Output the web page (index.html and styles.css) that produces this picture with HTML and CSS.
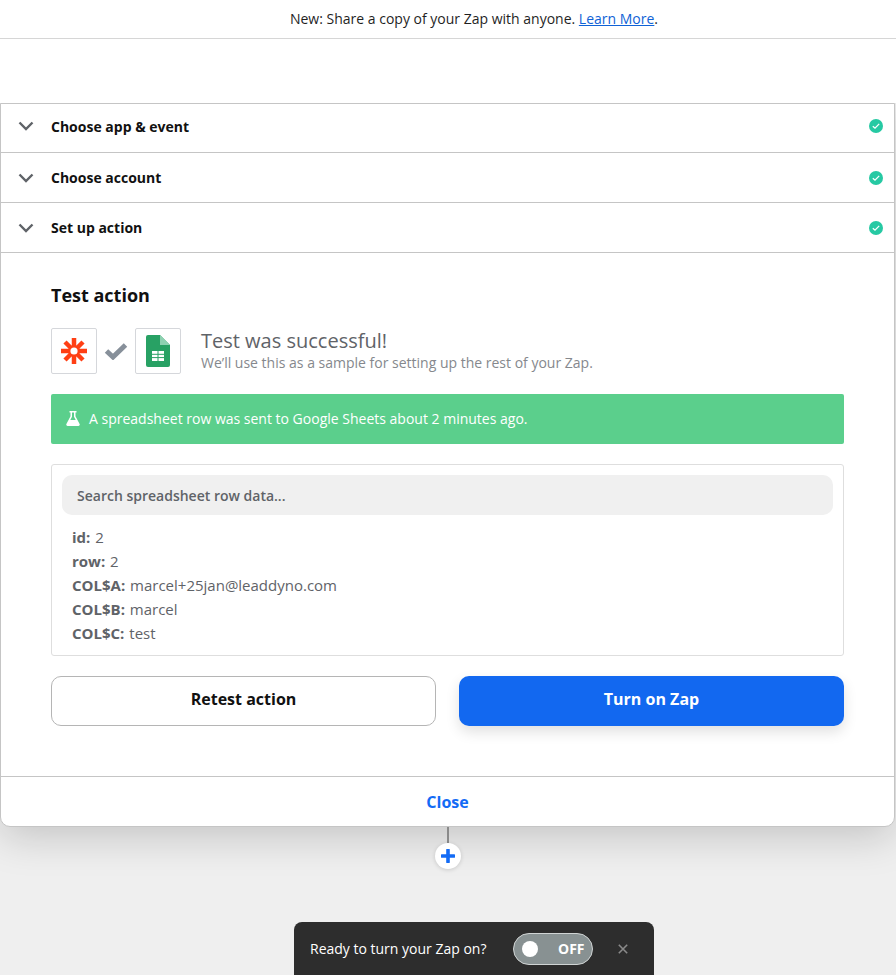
FILE: index.html
```html
<!DOCTYPE html>
<html lang="en">
<head>
    <meta charset="UTF-8">
    <meta name="viewport" content="width=device-width, initial-scale=1.0">
    <title>Test action</title>
    <link rel="stylesheet" href="styles.css">
</head>
<body>

<div class="notice">New: Share a copy of your Zap with anyone. <a href="#">Learn More</a>.</div>
<div class="notice-gap"></div>

<div class="card">
    <!-- Collapsed steps -->
    <div class="step step-first">
        <svg class="chevron" width="16" height="10" viewBox="0 0 16 10"><path d="M1.500 1.500 8 8l6.500-6.500" fill="none" stroke="#5f6368" stroke-width="2.400"/></svg>
        <span class="step-title">Choose app &amp; event</span>
        <svg class="done" width="14" height="14" viewBox="0 0 14 14"><circle cx="7" cy="7" r="7" fill="#26c9a3"/><path d="M3.800 7.200 6 9.200l4.200-4.300" fill="none" stroke="#fff" stroke-width="1.300"/></svg>
    </div>
    <div class="step">
        <svg class="chevron" width="16" height="10" viewBox="0 0 16 10"><path d="M1.500 1.500 8 8l6.500-6.500" fill="none" stroke="#5f6368" stroke-width="2.400"/></svg>
        <span class="step-title">Choose account</span>
        <svg class="done" width="14" height="14" viewBox="0 0 14 14"><circle cx="7" cy="7" r="7" fill="#26c9a3"/><path d="M3.800 7.200 6 9.200l4.200-4.300" fill="none" stroke="#fff" stroke-width="1.300"/></svg>
    </div>
    <div class="step">
        <svg class="chevron" width="16" height="10" viewBox="0 0 16 10"><path d="M1.500 1.500 8 8l6.500-6.500" fill="none" stroke="#5f6368" stroke-width="2.400"/></svg>
        <span class="step-title">Set up action</span>
        <svg class="done" width="14" height="14" viewBox="0 0 14 14"><circle cx="7" cy="7" r="7" fill="#26c9a3"/><path d="M3.800 7.200 6 9.200l4.200-4.300" fill="none" stroke="#fff" stroke-width="1.300"/></svg>
    </div>

    <div class="card-body">
        <h2 class="body-title">Test action</h2>

        <div class="result">
            <div class="app-box">
                <svg width="26" height="26" viewBox="0 0 26 26">
                    <path d="M13 0v26M0 13h26M4 4l18 18M22 4 4 22" stroke="#ff3f14" stroke-width="4.500"/>
                    <circle cx="13" cy="13" r="3.600" fill="#fff"/>
                </svg>
            </div>
            <svg class="result-check" width="24" height="18" viewBox="0 0 24 18"><path d="M2.500 9 9 15 21.500 3" fill="none" stroke="#87909a" stroke-width="5"/></svg>
            <div class="app-box">
                <svg width="24" height="32" viewBox="0 0 24 32">
                    <path d="M2 0h12l10 10v20a2 2 0 0 1-2 2H2a2 2 0 0 1-2-2V2a2 2 0 0 1 2-2z" fill="#28a164"/>
                    <path d="M14 0l10 10H14z" fill="#8ed1b1"/>
                    <path d="M6 16h12v10H6z" fill="#fff"/>
                    <path d="M6 19.300h12M6 22.600h12M12 16v10" stroke="#28a164" stroke-width="1"/>
                </svg>
            </div>
            <div class="result-text">
                <div class="result-title">Test was successful!</div>
                <div class="result-sub">We’ll use this as a sample for setting up the rest of your Zap.</div>
            </div>
        </div>

        <div class="banner">
            <svg width="14" height="15" viewBox="0 0 14 15"><path d="M3.500 0h7v1.500h-1v3.800L13.600 13A1.400 1.400 0 0 1 12.300 15H1.700A1.400 1.400 0 0 1 .4 13L4.500 5.300V1.500h-1zM6 1.500v4.200L4.300 9h5.400L8 5.700V1.500z" fill="#fff" fill-rule="evenodd"/></svg>
            <span>A spreadsheet row was sent to Google Sheets about 2 minutes ago.</span>
        </div>

        <div class="data-box">
            <div class="search">Search spreadsheet row data...</div>
            <div class="data-list">
                <div><b>id:</b> 2</div>
                <div><b>row:</b> 2</div>
                <div><b>COL$A:</b> marcel+25jan@leaddyno.com</div>
                <div><b>COL$B:</b> marcel</div>
                <div><b>COL$C:</b> test</div>
            </div>
        </div>

        <div class="actions">
            <button class="btn btn-outline">Retest action</button>
            <button class="btn btn-primary">Turn on Zap</button>
        </div>
    </div>

    <div class="card-footer"><a href="#">Close</a></div>
</div>

<div class="connector">
    <div class="connector-line"></div>
    <div class="add-step">
        <svg width="14" height="14" viewBox="0 0 14 14"><path d="M7 1v12M1 7h12" stroke="#136bf5" stroke-width="3.600" stroke-linecap="round"/></svg>
    </div>
</div>

<div class="ready-bar">
    <span>Ready to turn your Zap on?</span>
    <div class="toggle">
        <span class="toggle-knob"></span>
        <span class="toggle-label">OFF</span>
    </div>
    <svg class="ready-close" width="10" height="10" viewBox="0 0 10 10"><path d="M.8.8l8.400 8.400M9.200.8.800 9.200" stroke="#8a8a8a" stroke-width="1.600"/></svg>
</div>

</body>
</html>
```
FILE: styles.css
```css
html, body {
    height: 100%;
}
body {
    font-family: "Open Sans", Arial, sans-serif;
    margin: 0;
    padding: 0;
    height: 975px;
    overflow: hidden;
    position: relative;
    background-color: #efefef;
    color: #2d2e2e;
}
.notice {
    background: white;
    height: 38px;
    padding-left: 52px;
    border-bottom: 1px solid #d6d6d6;
    font-size: 14px;
    line-height: 38px;
    text-align: center;
    color: #1f1f1f;
    position: relative;
    z-index: 1;
}
.notice a {
    color: #0f62d6;
}
.notice-gap {
    background: white;
    height: 64px;
    position: relative;
    z-index: 1;
}
.card {
    width: 895px;
    box-sizing: border-box;
    background: white;
    border: 1px solid #c5c5c5;
    border-radius: 0 0 10px 10px;
    box-shadow: 0 10px 40px rgba(0, 0, 0, 0.18);
    position: relative;
}
.step {
    height: 49px;
    border-bottom: 1px solid #c5c5c5;
    display: flex;
    align-items: center;
    padding: 0 11px 0 17px;
}
.step-first {
    height: 44px;
    padding-bottom: 4px;
}
.chevron {
    margin-right: 17px;
}
.step-title {
    flex: 1;
    font-size: 14px;
    font-weight: 700;
    color: #111;
}
.card-body {
    padding: 29px 50px 50px;
    box-sizing: border-box;
    height: 523px;
}
.body-title {
    margin: 0;
    font-size: 18px;
    line-height: 26px;
    font-weight: 700;
    color: #111;
}
.result {
    display: flex;
    align-items: center;
    margin-top: 20px;
}
.app-box {
    width: 44px;
    height: 44px;
    border: 1px solid #d5d7db;
    border-radius: 2px;
    display: flex;
    align-items: center;
    justify-content: center;
}
.result-check {
    margin: 0 7px;
}
.result-text {
    margin-left: 20px;
    margin-top: -2px;
}
.result-title {
    font-size: 20px;
    line-height: 26px;
    color: #5f6368;
}
.result-sub {
    font-size: 14px;
    line-height: 18px;
    color: #85888d;
}
.banner {
    margin-top: 20px;
    height: 50px;
    padding: 0 15px 2px;
    box-sizing: border-box;
    background-color: #5bcf8c;
    border-radius: 2px;
    display: flex;
    align-items: center;
    gap: 9px;
    font-size: 14px;
    color: white;
}
.data-box {
    margin-top: 20px;
    height: 192px;
    box-sizing: border-box;
    border: 1px solid #dedede;
    border-radius: 3px;
    padding: 10px;
}
.search {
    height: 40px;
    line-height: 42px;
    background: #f0f0f0;
    border-radius: 10px;
    padding: 0 15px;
    font-size: 14px;
    font-weight: 600;
    color: #5f6368;
}
.data-list {
    margin-top: 10px;
    padding: 0 10px;
    font-size: 15px;
    line-height: 24px;
    color: #5f6368;
}
.data-list b {
    margin-right: 1px;
}
.actions {
    display: grid;
    grid-template-columns: 1fr 1fr;
    gap: 23px;
    margin-top: 20px;
}
.btn {
    height: 50px;
    padding: 0 0 5px;
    border-radius: 10px;
    font-family: inherit;
    font-size: 16px;
    font-weight: 700;
}
.btn-outline {
    background: white;
    border: 1px solid #b5b5b5;
    color: #111;
}
.btn-primary {
    background-color: #1268f0;
    border: none;
    color: white;
    box-shadow: 0 6px 14px rgba(0, 0, 0, 0.12);
}
.card-footer {
    height: 49px;
    border-top: 1px solid #c5c5c5;
    text-align: center;
    line-height: 50px;
    font-size: 16px;
    font-weight: 700;
}
.card-footer a {
    color: #136bf5;
    text-decoration: none;
}
.connector {
    display: flex;
    flex-direction: column;
    align-items: center;
    position: relative;
}
.connector-line {
    width: 2px;
    height: 16px;
    background: #8a8a8a;
}
.add-step {
    width: 26px;
    height: 26px;
    border-radius: 50%;
    background: white;
    box-shadow: 0 1px 4px rgba(0, 0, 0, 0.15);
    display: flex;
    align-items: center;
    justify-content: center;
}
.ready-bar {
    position: absolute;
    left: 294px;
    bottom: 0;
    width: 360px;
    height: 53px;
    box-sizing: border-box;
    padding: 0 26px 0 16px;
    background: #2d2d2d;
    border-radius: 8px 8px 0 0;
    display: flex;
    align-items: center;
    font-size: 14px;
    color: white;
}
.toggle {
    width: 80px;
    height: 32px;
    box-sizing: border-box;
    margin-left: 26px;
    border: 1px solid #d0d4d4;
    border-radius: 16px;
    background: #889192;
    display: flex;
    align-items: center;
    justify-content: space-between;
    padding: 0 7px 0 8px;
}
.toggle-knob {
    width: 16px;
    height: 16px;
    border-radius: 50%;
    background: white;
}
.toggle-label {
    font-size: 14px;
    font-weight: 700;
}
.ready-close {
    margin-left: 25px;
}
```
